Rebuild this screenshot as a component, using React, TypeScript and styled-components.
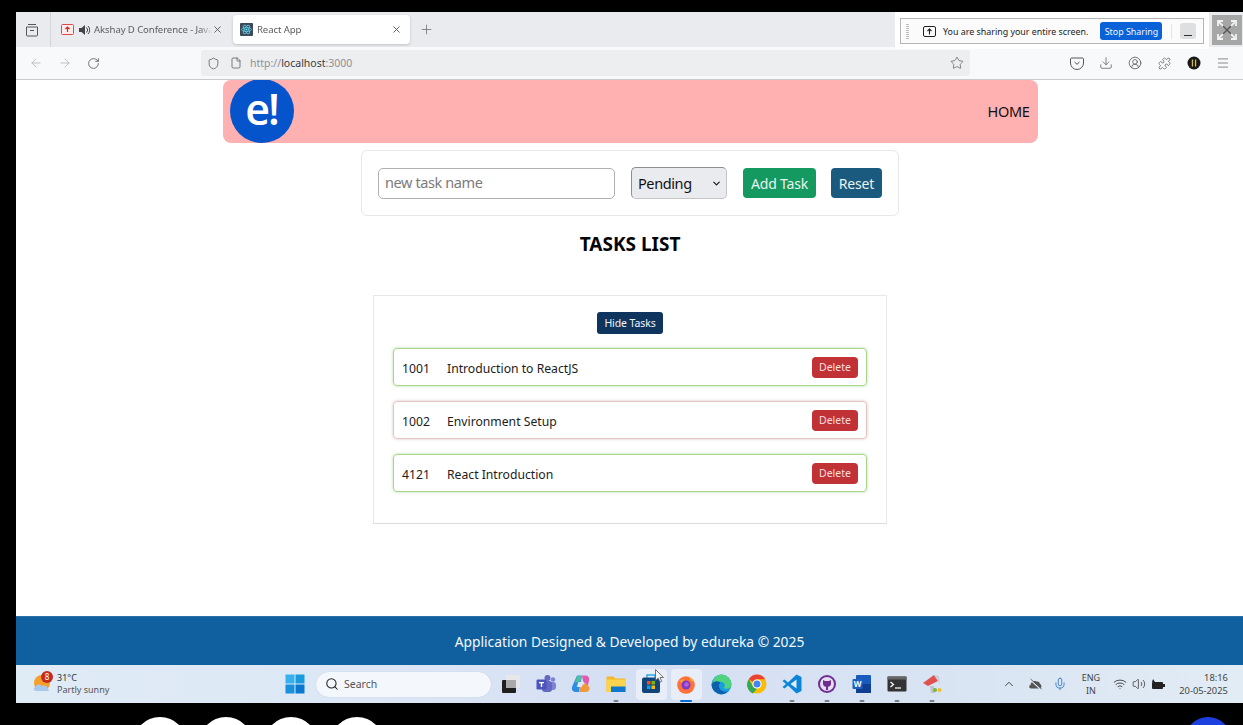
import React from "react";
import styled, { createGlobalStyle } from "styled-components";
import {
  ArrowLeft, ArrowRight, RotateCw, Shield, File, Star, Download, CircleUserRound,
  Puzzle, Menu, Search, ChevronUp, Mic, Wifi, Volume2, X, Plus, ChevronDown,
} from "lucide-react";

const UI = `"Noto Sans", "Open Sans", sans-serif`;

const Global = createGlobalStyle`
  html, body { margin: 0; height: 100%; background: #000; overflow: hidden; }
  * { box-sizing: border-box; }
  body { font-family: ${UI}; }
`;

const Frame = styled.div`
  width: 1243px; height: 725px; display: flex; flex-direction: column; background: #000; padding-top: 12px;
  overflow: hidden; position: relative;
`;
const Screen = styled.div`
  margin-left: 16px; width: 1227px; height: 691px; display: flex; flex-direction: column; flex: none; position: relative;
`;
const TabBar = styled.div`
  height: 35px; background: #e9ebee; display: flex; align-items: center; flex: none; color: #4a4a4f;
`;
const TabSide = styled.div`
  width: 35px; height: 100%; border-right: 1px solid #d4d5d8; display: flex; align-items: center; justify-content: center;
  flex: none; padding-right: 2px;
`;
const Tab = styled.div<{ $active?: boolean }>`
  height: 29px; display: flex; align-items: center; border-radius: 4px; font-size: 9.6px; letter-spacing: -0.1px;
  white-space: nowrap; overflow: hidden; flex: none;
  width: ${(p) => (p.$active ? "177px" : "165px")};
  margin-left: ${(p) => (p.$active ? "8px" : "9px")};
  padding: 0 ${(p) => (p.$active ? "8px" : "2px")} 0 ${(p) => (p.$active ? "7px" : "1px")};
  background: ${(p) => (p.$active ? "#fff" : "transparent")};
  box-shadow: ${(p) => (p.$active ? "0 1px 3px rgba(0,0,0,.18)" : "none")};
  color: #55565a;
`;
const TabTitle = styled.span`
  flex: 1; overflow: hidden; color: #5c5d61; margin-left: 4px;
  mask-image: linear-gradient(90deg, #000 90%, transparent);
`;
const PlusSlot = styled.div`
  margin-left: 9px; display: flex; color: #6a6a6e;
`;
const ToolBar = styled.div`
  height: 33px; background: #f8f9fa; border-bottom: 1px solid #c9cacc; display: flex; align-items: center; flex: none;
  padding-left: 13px; color: #5b5b60; position: relative;
`;
const NavGroup = styled.div`
  display: flex; gap: 15px; width: 172px; flex: none; align-items: center;
`;
const NavSlot = styled.span<{ $dim?: boolean }>`
  display: flex; color: ${(p) => (p.$dim ? "#b3b4b7" : "#56565a")};
`;
const UrlBar = styled.div`
  width: 769px; height: 26px; background: #eceeef; border-radius: 3px; display: flex; align-items: center; padding: 0 6px 0 6px;
  flex: none; color: #56565a;
`;
const UrlText = styled.div`
  flex: 1; font-size: 10.5px; color: #909095; margin-left: 8px;
  b { font-weight: 400; color: #3b3b3f; }
`;
const ToolIcons = styled.div`
  display: flex; margin-left: 100px; gap: 15.2px; align-items: center;
`;
const ToolSlot = styled.span`
  width: 14px; height: 16px; display: flex; align-items: center; justify-content: center;
`;
const Page = styled.main`
  height: 536px; background: #fff; display: flex; flex-direction: column; align-items: center; flex: none; padding-left: 1px;
`;
const Header = styled.header`
  width: 815px; height: 63px; background: #ffb0b0; border-radius: 8px; display: flex; align-items: center;
  justify-content: space-between; padding: 0 8px 0 7px; flex: none; color: #111;
`;
const Logo = styled.div`
  width: 64px; height: 64px; margin-top: -1px; border-radius: 50%; background: #0654cc; color: #fff; display: flex; align-items: center;
  justify-content: center; font-family: "Open Sans", sans-serif; font-weight: 600; font-size: 43px; letter-spacing: -2px;
  padding-bottom: 6px;
`;
const HomeLink = styled.a`
  font-size: 14.5px; letter-spacing: -0.35px; color: #111; margin-bottom: 2px;
`;
const FormCard = styled.div`
  width: 538px; height: 66px; margin-top: 7px; border: 1px solid #e8e8e8; border-radius: 6px; display: flex;
  align-items: center; padding: 0 15px 0 16px; flex: none; gap: 16px;
`;
const TaskInput = styled.div`
  width: 237px; height: 31px; border: 1px solid #b0b0b0; border-radius: 5px; font-size: 14.5px; letter-spacing: -0.4px; color: #7b7b7b;
  display: flex; align-items: center; padding: 0 0 2px 6px;
`;
const StatusSelect = styled.div`
  width: 96px; height: 32px; background: #e9ebee; border: 1px solid #c4c4c4; border-top-color: #8e8e8e; border-left-color: #8e8e8e;
  border-radius: 5px; font-size: 14.5px; letter-spacing: -0.4px; color: #111; display: flex; align-items: center; justify-content: space-between;
  padding: 0 4px 0 6px;
`;
const ActionButton = styled.button<{ $bg: string; $w: number }>`
  width: ${(p) => p.$w}px; height: 30px; background: ${(p) => p.$bg}; color: #e9f3ef; border: 0; border-radius: 4px;
  font-family: ${UI}; font-size: 14px; letter-spacing: -0.2px; padding: 0; display: flex; align-items: center; justify-content: center;
  & + & { margin-left: -1px; }
`;
const Title = styled.h2`
  margin: 14px 0 0; font-size: 19px; line-height: 28px; font-weight: 700; color: #050505; height: 28px; flex: none;
`;
const ListCard = styled.section`
  width: 514px; height: 229px; margin-top: 37px; border: 1px solid #e8e8e8; border-bottom-color: #dcdcdc;
  display: flex; flex-direction: column; align-items: center; padding: 16px 19px 0; flex: none;
`;
const HideButton = styled.button`
  width: 66px; height: 22px; background: #0f355f; color: #f2f5f8; border: 0; border-radius: 3px; font-family: ${UI};
  font-size: 10.5px; letter-spacing: -0.1px; padding: 0; flex: none;
`;
const Rows = styled.div`
  width: 100%; display: flex; flex-direction: column; gap: 15px; margin-top: 14px;
`;
const Row = styled.div<{ $done: boolean }>`
  height: 38px; border-radius: 4px; display: flex; align-items: center; padding: 0 8px 0 8px; font-size: 12.2px; color: #1c1c1c;
  border: 1px solid ${(p) => (p.$done ? "#a9d58f" : "#e5c5c2")};
  box-shadow: 0 0 3px ${(p) => (p.$done ? "rgba(130,190,100,.6)" : "rgba(200,150,150,.6)")};
`;
const RowId = styled.span`
  width: 45px; flex: none; margin-top: 2px;
`;
const RowName = styled.span`
  flex: 1; margin-top: 2px;
`;
const DeleteButton = styled.button`
  width: 46px; height: 21px; background: #c13237; color: #f6dede; border: 0; border-radius: 4px; font-family: ${UI};
  font-size: 10.5px; padding: 0;
`;
const Footer = styled.footer`
  height: 49px; background: #1060a0; color: #f4f8fb; font-size: 13.8px; display: flex; align-items: center; justify-content: center;
  flex: none; padding-top: 1px; border-top: 1px solid #2a70a8;
`;
const Taskbar = styled.div`
  height: 38px; flex: none; display: flex; align-items: center; position: relative;
  background: linear-gradient(90deg, #dfebf5 0%, #dde8f6 25%, #d5dff3 50%, #d9e4f3 75%, #e1ecf5 100%);
  color: #333;
`;
const Weather = styled.div`
  width: 261px; flex: none; padding-left: 17px; display: flex; align-items: center; gap: 4px; position: relative;
`;
const Badge = styled.span`
  position: absolute; left: 25px; top: -1px; width: 12px; height: 12px; border-radius: 50%; background: #c42b1c; color: #fff;
  font-size: 8px; line-height: 12px; text-align: center;
`;
const WeatherText = styled.div`
  font-size: 9px; line-height: 12.5px; color: #555;
  div:first-child { color: #333; }
`;
const StartSlot = styled.div`
  width: 36px; flex: none; display: flex; justify-content: center;
`;
const SearchBox = styled.div`
  width: 175px; height: 25px; background: #f4f7fc; border-radius: 13px; display: flex; align-items: center; gap: 5px;
  padding-left: 9px; font-size: 10.5px; color: #555; margin-left: 3px; flex: none; box-shadow: 0 0 1px rgba(0,0,0,.2);
`;
const AppIcons = styled.div`
  display: flex; margin-left: 2px; flex: none; height: 100%;
`;
const AppSlot = styled.div<{ $hl?: boolean }>`
  width: 35.15px; height: 100%; display: flex; align-items: center; justify-content: center; position: relative;
  &::before {
    content: ""; display: ${(p) => (p.$hl ? "block" : "none")}; position: absolute; left: 2px; right: 2px; top: 4px; bottom: 3px;
    background: rgba(255,255,255,.45); border-radius: 4px;
  }
  svg { position: relative; }
`;
const Dot = styled.span<{ $on?: boolean }>`
  position: absolute; bottom: 1px; left: 50%; transform: translateX(-50%); height: 2.5px; border-radius: 2px;
  width: ${(p) => (p.$on ? "12px" : "5px")}; background: ${(p) => (p.$on ? "#0a6fd0" : "#7d8187")};
`;
const Tray = styled.div`
  display: flex; align-items: center; flex: none; margin-left: 46px; color: #333; height: 100%;
`;
const TraySlot = styled.span<{ $w: number }>`
  width: ${(p) => p.$w}px; display: flex; justify-content: center; flex: none;
`;
const Lang = styled.div`
  font-size: 9px; line-height: 13px; text-align: center; width: 30px; margin: 0 5px 0 3px; color: #444; flex: none;
`;
const Clock = styled.div`
  font-size: 9.3px; line-height: 13px; text-align: right; width: 60px; color: #444; flex: none;
`;
const ShareBar = styled.div`
  position: absolute; left: 879px; top: 0; width: 314px; height: 37px; background: #fff; padding: 6px 5px;
`;
const ShareInner = styled.div`
  height: 26px; border: 1px solid #b4b4b4; background: #fbfbfb; display: flex; align-items: center; padding-left: 5px;
  font-size: 8.9px; color: #222; white-space: nowrap;
`;
const Grip = styled.span`
  width: 3px; height: 15px; flex: none;
  background: repeating-linear-gradient(180deg, #bdbdbd 0 1px, transparent 1px 2px);
`;
const ShareIcon = styled.span`
  margin: 0 7px 0 14px; display: flex; color: #222;
`;
const StopButton = styled.span`
  margin-left: 12px; width: 62px; height: 18px; background: #0a62d8; color: #f2f7fe; border-radius: 3px; font-size: 8.9px;
  display: flex; align-items: center; justify-content: center; flex: none;
`;
const ShareSep = styled.span`
  width: 1px; height: 15px; background: #e4e4e4; margin-left: 9px; flex: none;
`;
const MinButton = styled.span`
  width: 16px; height: 16px; background: #dedfe0; border-radius: 3px; margin-left: 8px; position: relative; flex: none;
  &::after { content: ""; position: absolute; left: 4px; right: 4px; bottom: 3px; height: 1.5px; background: #333; }
`;
const ExpandBox = styled.div`
  position: absolute; left: 1196px; top: 3px; width: 30px; height: 30px; background: #a6a6a6; display: flex;
  align-items: center; justify-content: center;
`;
const Pointer = styled.div`
  position: absolute; left: 639px; top: 657px; display: flex;
`;
const Strip = styled.div`
  flex: 1; display: flex; padding: 14px 0 0 133px; gap: 11.6px; position: relative; overflow: hidden;
`;
const Ball = styled.span`
  width: 54px; height: 54px; border-radius: 50%; background: #fff; flex: none;
`;
const BlueBall = styled(Ball)`
  background: #1c3fe0; margin-left: 790px; width: 46px; height: 46px;
`;

const ArchiveIcon = () => (
  <svg width="14" height="14" viewBox="0 0 14 14" fill="none" stroke="#55565a" strokeWidth="1">
    <path d="M3 1.500h8M1.500 4h11M1.500 4v8a1 1 0 0 0 1 1h9a1 1 0 0 0 1-1V4" />
    <path d="M5 7.500h4" />
  </svg>
);
const CursorArrow = () => (
  <svg width="10" height="14" viewBox="0 0 10 14">
    <path d="M.5.500v11l2.700-2.300 1.700 4 1.800-.8-1.700-3.900h3.500z" fill="#f5f5f5" stroke="#555" strokeWidth=".8" />
  </svg>
);
const WinLogo = () => (
  <svg width="20" height="20" viewBox="0 0 20 20">
    <rect x="0.5" y="0.5" width="9" height="9" fill="#36b0ee" />
    <rect x="10.5" y="0.5" width="9" height="9" fill="#1a9be0" />
    <rect x="0.5" y="10.5" width="9" height="9" fill="#1990dc" />
    <rect x="10.5" y="10.5" width="9" height="9" fill="#0a78d0" />
  </svg>
);
const TaskView = () => (
  <svg width="20" height="20" viewBox="0 0 20 20">
    <rect x="5" y="1" width="14" height="13" rx="1" fill="#e8e8ea" />
    <rect x="1" y="6" width="14" height="13" rx="1" fill="#1f1f1f" />
    <rect x="5" y="6" width="10" height="8" fill="#a9a9ab" />
  </svg>
);
const Teams = () => (
  <svg width="20" height="20" viewBox="0 0 20 20">
    <circle cx="11.5" cy="4" r="3" fill="#6468c0" />
    <circle cx="17" cy="5.5" r="2.2" fill="#7b83d4" />
    <rect x="13" y="8" width="7" height="8" rx="3" fill="#7b83d4" />
    <rect x="6" y="7" width="10" height="11" rx="3" fill="#6468c0" />
    <rect x="0.5" y="5.5" width="10" height="10" rx="1.3" fill="#4b53bc" />
    <path d="M3 8h5v1.3H6.2V13H4.8V9.3H3z" fill="#fff" />
  </svg>
);
const Copilot = () => (
  <svg width="20" height="20" viewBox="0 0 20 20">
    <path d="M6 1.5h5L8 18H4.5C2 18 .3 15.5 1 13z" fill="#2b8ee6" />
    <path d="M11 1.5h3.5c2.5 0 4 2 3.7 4.5L16.500 13 12 7z" fill="#e05cb0" />
    <path d="M8 18l2-6 5-3 3.500 4.500c.4 2.400-1 4.500-3.500 4.500z" fill="#f09a3c" />
    <path d="M6 2h5L9.500 7 4 9z" fill="#4fc0a0" />
    <path d="M7.300 8h5l-1.500 5h-5z" fill="#dfe7f5" />
  </svg>
);
const Explorer = () => (
  <svg width="20" height="20" viewBox="0 0 20 20">
    <path d="M0.500 2.500h7l2 2h10v13.500h-19z" fill="#f2b72d" />
    <rect x="0.500" y="5.500" width="19" height="12.500" fill="#fbd44e" />
    <rect x="5" y="12.500" width="14.500" height="5.500" fill="#0e78cf" />
  </svg>
);
const Store = () => (
  <svg width="20" height="20" viewBox="0 0 20 20">
    <path d="M6 3.500V1h8v2.500" fill="none" stroke="#28a8ea" strokeWidth="1.500" />
    <rect x="1" y="3.500" width="18" height="15.500" rx="2" fill="#11447a" />
    <rect x="6" y="7" width="3.500" height="3.500" fill="#f25022" />
    <rect x="10.500" y="7" width="3.500" height="3.500" fill="#7fba00" />
    <rect x="6" y="11.500" width="3.500" height="3.500" fill="#00a4ef" />
    <rect x="10.500" y="11.500" width="3.500" height="3.500" fill="#ffb900" />
  </svg>
);
const Firefox = () => (
  <svg width="20" height="20" viewBox="0 0 20 20">
    <circle cx="10" cy="11" r="8.800" fill="#ff7139" />
    <path d="M12 .8c1 3 5 4 6.800 9.200-.6-1.800-2-3-4-3.500z" fill="#ffbd2e" />
    <path d="M2 6c2 2 4-1 6.500-1L6 9z" fill="#ffa436" />
    <circle cx="10" cy="11" r="4.500" fill="#7a3bc8" />
    <circle cx="10.500" cy="10.500" r="2.200" fill="#b45fd8" />
  </svg>
);
const Edge = () => (
  <svg width="21" height="21" viewBox="0 0 20 20">
    <circle cx="10" cy="10" r="9.500" fill="#1b9de2" />
    <path d="M10 .5a9.500 9.500 0 0 1 9.500 9.500c0 2.500-2 4-4.500 4-2 0-3-1-3-1 2-1 1.500-5-2-5.500-4-.6-7 2-9 4C1 5.500 5 .5 10 .5z" fill="#4fd37f" />
    <path d="M7.500 11c0 4 4 7 9 5.500A9.500 9.500 0 0 1 .5 10c1-2 3-3 5-3 2.500 0 3.500 1.500 3.500 1.500-1 .5-1.500 1.500-1.500 2.500z" fill="#0c5fa8" />
  </svg>
);
const Chrome = () => (
  <svg width="20" height="20" viewBox="0 0 20 20">
    <circle cx="10" cy="10" r="9.500" fill="#fbbc04" />
    <path d="M10 .5a9.500 9.500 0 0 1 8.200 4.750H10a4.750 4.750 0 0 0-4.100 2.400L1.800 5.250A9.500 9.500 0 0 1 10 .5z" fill="#ea4335" />
    <path d="M1.800 5.250l4.100 7.100a4.750 4.750 0 0 0 4.100 2.400L5.900 19.500A9.500 9.500 0 0 1 1.800 5.250z" fill="#34a853" />
    <circle cx="10" cy="10" r="4.600" fill="#fff" />
    <circle cx="10" cy="10" r="3.500" fill="#4285f4" />
  </svg>
);
const VSCode = () => (
  <svg width="20" height="20" viewBox="0 0 20 20">
    <path d="M14.500 .5L19.500 3v14l-5 2.500L6 11.500 2.500 14.500.5 13l3.500-3L.5 7l2-1.500L6 8.500z" fill="#0a86d8" />
    <path d="M14.500 5.500v9L8.500 10z" fill="#e4eaf6" />
  </svg>
);
const GitHubApp = () => (
  <svg width="20" height="20" viewBox="0 0 20 20">
    <circle cx="10" cy="10" r="9" fill="#6e2d91" />
    <circle cx="10" cy="10" r="7" fill="#e6def0" />
    <path d="M6 6l2 1h4l2-1v3.500c0 2-1 3-3 3.300V16H9v-3.200C7 12.500 6 11.500 6 9.500z" fill="#6e2d91" />
  </svg>
);
const Word = () => (
  <svg width="20" height="20" viewBox="0 0 20 20">
    <rect x="4" y="1" width="15" height="18" rx="1" fill="#185abd" />
    <rect x="4" y="10" width="15" height="9" fill="#103f91" />
    <rect x="0.500" y="5" width="10" height="10" rx="1" fill="#1e5fc0" />
    <text x="5.500" y="13" fontSize="8" fontWeight="700" fill="#fff" textAnchor="middle" fontFamily="Noto Sans">W</text>
  </svg>
);
const Terminal = () => (
  <svg width="20" height="20" viewBox="0 0 20 20">
    <rect x="0.500" y="2.500" width="19" height="15" rx="1" fill="#333" />
    <rect x="0.500" y="2.500" width="19" height="3" fill="#666" />
    <path d="M3.500 8l3 2.500-3 2.500" fill="none" stroke="#fff" strokeWidth="1.200" />
    <path d="M8 14h6" stroke="#fff" strokeWidth="1.200" />
  </svg>
);
const Snip = () => (
  <svg width="20" height="20" viewBox="0 0 20 20">
    <path d="M1 9L12 1l4 6-10 5z" fill="#e0524f" />
    <path d="M12 1l5 1 1 9-2-4z" fill="#c9ced6" />
    <path d="M8 12h4l1 7H9z" fill="#c0c4ca" />
    <circle cx="13" cy="16" r="2" fill="#7fb53a" />
    <circle cx="17.500" cy="16" r="2" fill="#efc02e" />
  </svg>
);
const WeatherIcon = () => (
  <svg width="20" height="21" viewBox="0 0 20 21">
    <circle cx="9" cy="9" r="8" fill="#f5a02a" />
    <path d="M3 17c-2.500 0-3-3.500-.5-4 .5-3 5-3.500 6.500-1 2-1.500 6 0 5 2.500 2.500 0 2.500 2.500.5 2.500z" fill="#a9c8ec" />
  </svg>
);
const ReactFav = () => (
  <svg width="13" height="13" viewBox="0 0 13 13">
    <rect width="13" height="13" rx="1" fill="#3c4a55" />
    <g fill="none" stroke="#61dafb" strokeWidth=".7">
      <ellipse cx="6.500" cy="6.500" rx="5" ry="2" />
      <ellipse cx="6.500" cy="6.500" rx="5" ry="2" transform="rotate(60 6.500 6.500)" />
      <ellipse cx="6.500" cy="6.500" rx="5" ry="2" transform="rotate(120 6.500 6.500)" />
    </g>
    <circle cx="6.500" cy="6.500" r="1" fill="#61dafb" />
  </svg>
);
const UploadFav = () => (
  <svg width="13" height="11" viewBox="0 0 13 11" style={{ flex: "none" }}>
    <rect x=".5" y=".5" width="12" height="10" rx="1" fill="#fdeaea" stroke="#e0484a" />
    <path d="M6.500 8V3M4.500 5l2-2 2 2" fill="none" stroke="#d02a2e" strokeWidth="1.200" />
  </svg>
);
const SpeakerFill = () => (
  <svg width="11" height="10" viewBox="0 0 11 10" style={{ flex: "none", marginLeft: 5 }}>
    <path d="M0 3h2.500L6 0v10L2.500 7H0z" fill="#444" />
    <path d="M7.500 2.500a3.500 3.500 0 0 1 0 5M9 1a5.500 5.500 0 0 1 0 8" fill="none" stroke="#444" />
  </svg>
);
const ShareUp = () => (
  <svg width="13" height="11" viewBox="0 0 13 11">
    <rect x=".5" y=".5" width="12" height="10" rx="1.500" fill="none" stroke="#222" />
    <path d="M6.500 8.500V3M4.500 5l2-2 2 2" fill="none" stroke="#222" strokeWidth="1.100" />
  </svg>
);
const Pocket = () => (
  <svg width="14" height="13" viewBox="0 0 14 13">
    <path d="M1.500 1h11c.5 0 1 .5 1 1v4a6.500 6.500 0 0 1-13 0V2c0-.5.500-1 1-1z" fill="none" stroke="#56565a" />
    <path d="M4.500 5L7 7.300 9.500 5" fill="none" stroke="#56565a" />
  </svg>
);
const DarkExt = () => (
  <svg width="14" height="14" viewBox="0 0 14 14">
    <circle cx="7" cy="7" r="6.500" fill="#181818" />
    <rect x="4.800" y="3.500" width="1.300" height="7" fill="#d8b945" />
    <rect x="7.900" y="3.500" width="1.300" height="7" fill="#d8b945" />
  </svg>
);
const CloudOff = () => (
  <svg width="14" height="12" viewBox="0 0 14 12">
    <path d="M3 10.500C1 10.500.5 7.500 2.500 7c0-3 3.500-5 6-3.500 2-.5 3.500 1 3.500 2.500 2 .5 2 4.500-.5 4.500z" fill="#555" />
    <path d="M1.500 1L12.500 11" stroke="#e6eff6" strokeWidth="1.600" />
    <path d="M2.500 1L13.500 11" stroke="#333" strokeWidth=".8" />
  </svg>
);
const Battery = () => (
  <svg width="14" height="11" viewBox="0 0 14 11">
    <rect x="1" y="3" width="11" height="7" rx="1" fill="#222" />
    <rect x="12" y="5" width="2" height="3" fill="#222" />
    <path d="M2 0l2 3H1z" fill="#222" />
  </svg>
);
const Expand = () => (
  <svg width="22" height="22" viewBox="0 0 22 22" fill="none">
    <path d="M2 2l18 18" stroke="#555" strokeWidth="1.300" />
    <path d="M20 2L2 20" stroke="#555" strokeWidth="1.300" />
    <path d="M2 7V2h5M15 2h5v5M20 15v5h-5M7 20H2v-5" stroke="#f2f2f2" strokeWidth="1.800" />
    <path d="M3 3l4 4M19 3l-4 4M19 19l-4-4M3 19l4-4" stroke="#f2f2f2" strokeWidth="1.800" />
  </svg>
);

const tasks = [
  { id: 1001, name: "Introduction to ReactJS", done: true },
  { id: 1002, name: "Environment Setup", done: false },
  { id: 4121, name: "React Introduction", done: true },
];

const apps: { icon: React.ReactNode; hl?: boolean; dot?: boolean; on?: boolean }[] = [
  { icon: <TaskView /> },
  { icon: <Teams /> },
  { icon: <Copilot /> },
  { icon: <Explorer />, dot: true },
  { icon: <Store />, hl: true },
  { icon: <Firefox />, hl: true, dot: true, on: true },
  { icon: <Edge /> },
  { icon: <Chrome /> },
  { icon: <VSCode />, dot: true },
  { icon: <GitHubApp />, dot: true },
  { icon: <Word />, dot: true },
  { icon: <Terminal />, dot: true },
  { icon: <Snip />, dot: true },
];

export default function App() {
  return (
    <Frame>
      <Global />
      <Screen>
        <TabBar>
          <TabSide><ArchiveIcon /></TabSide>
          <Tab>
            <UploadFav />
            <SpeakerFill />
            <TabTitle>Akshay D Conference - Java</TabTitle>
            <X size={11} />
          </Tab>
          <Tab $active>
            <ReactFav />
            <TabTitle>React App</TabTitle>
            <X size={11} />
          </Tab>
          <PlusSlot><Plus size={15} strokeWidth={1.2} /></PlusSlot>
        </TabBar>
        <ToolBar>
          <NavGroup>
            <NavSlot $dim><ArrowLeft size={14} strokeWidth={1.4} /></NavSlot>
            <NavSlot $dim><ArrowRight size={14} strokeWidth={1.4} /></NavSlot>
            <NavSlot><RotateCw size={13} strokeWidth={1.5} /></NavSlot>
          </NavGroup>
          <UrlBar>
            <Shield size={13} strokeWidth={1.4} />
            <File size={12} strokeWidth={1.5} style={{ marginLeft: 10 }} />
            <UrlText>http://<b>localhost</b>:3000</UrlText>
            <Star size={14} strokeWidth={1.2} />
          </UrlBar>
          <ToolIcons>
            <ToolSlot><Pocket /></ToolSlot>
            <ToolSlot><Download size={14} strokeWidth={1.3} /></ToolSlot>
            <ToolSlot><CircleUserRound size={14} strokeWidth={1.4} /></ToolSlot>
            <ToolSlot><Puzzle size={13} strokeWidth={1.4} /></ToolSlot>
            <ToolSlot><DarkExt /></ToolSlot>
            <ToolSlot><Menu size={14} strokeWidth={1.2} /></ToolSlot>
          </ToolIcons>
        </ToolBar>
        <Page>
          <Header>
            <Logo>e!</Logo>
            <HomeLink>HOME</HomeLink>
          </Header>
          <FormCard>
            <TaskInput>new task name</TaskInput>
            <StatusSelect>Pending<ChevronDown size={11} strokeWidth={2.4} /></StatusSelect>
            <ActionButton $bg="#149960" $w={73}>Add Task</ActionButton>
            <ActionButton $bg="#1a5a7e" $w={51}>Reset</ActionButton>
          </FormCard>
          <Title>TASKS LIST</Title>
          <ListCard>
            <HideButton>Hide Tasks</HideButton>
            <Rows>
              {tasks.map((t) => (
                <Row key={t.id} $done={t.done}>
                  <RowId>{t.id}</RowId>
                  <RowName>{t.name}</RowName>
                  <DeleteButton>Delete</DeleteButton>
                </Row>
              ))}
            </Rows>
          </ListCard>
        </Page>
        <Footer>Application Designed &amp; Developed by edureka © 2025</Footer>
        <Taskbar>
          <Weather>
            <WeatherIcon />
            <Badge>8</Badge>
            <WeatherText>
              <div>31°C</div>
              <div>Partly sunny</div>
            </WeatherText>
          </Weather>
          <StartSlot><WinLogo /></StartSlot>
          <SearchBox><Search size={14} strokeWidth={1.8} color="#222" />Search</SearchBox>
          <AppIcons>
            {apps.map((a, i) => (
              <AppSlot key={i} $hl={a.hl}>
                {a.icon}
                {a.dot && <Dot $on={a.on} />}
              </AppSlot>
            ))}
          </AppIcons>
          <Tray>
            <TraySlot $w={26}><ChevronUp size={14} strokeWidth={1.5} /></TraySlot>
            <TraySlot $w={26}><CloudOff /></TraySlot>
            <TraySlot $w={25}><Mic size={14} strokeWidth={1.4} color="#2a72c8" /></TraySlot>
            <Lang>ENG<br />IN</Lang>
            <TraySlot $w={19}><Wifi size={14} strokeWidth={1.5} /></TraySlot>
            <TraySlot $w={19}><Volume2 size={14} strokeWidth={1.3} /></TraySlot>
            <TraySlot $w={19}><Battery /></TraySlot>
            <Clock>18:16<br />20-05-2025</Clock>
          </Tray>
        </Taskbar>
        <ShareBar>
          <ShareInner>
            <Grip />
            <ShareIcon><ShareUp /></ShareIcon>
            You are sharing your entire screen.
            <StopButton>Stop Sharing</StopButton>
            <ShareSep />
            <MinButton />
          </ShareInner>
        </ShareBar>
        <ExpandBox><Expand /></ExpandBox>
        <Pointer><CursorArrow /></Pointer>
      </Screen>
      <Strip>
        <Ball /><Ball /><Ball /><Ball />
        <BlueBall />
      </Strip>
    </Frame>
  );
}
